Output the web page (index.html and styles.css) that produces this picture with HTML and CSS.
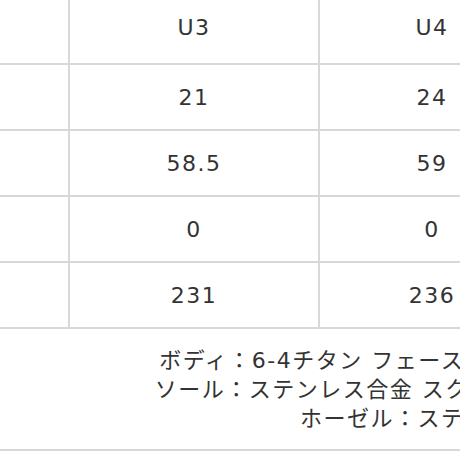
FILE: index.html
```html
<!DOCTYPE html>
<html lang="ja">
<head>
<meta charset="utf-8">
<link rel="stylesheet" href="styles.css">
</head>
<body>
<table class="spec">
  <colgroup>
    <col class="c-label">
    <col class="c-u3">
    <col class="c-u4">
    <col class="c-u5">
  </colgroup>
  <tr class="head">
    <td class="label"></td>
    <td>U3</td>
    <td>U4</td>
    <td>U5</td>
  </tr>
  <tr>
    <td class="label"></td>
    <td>21</td>
    <td>24</td>
    <td>27</td>
  </tr>
  <tr>
    <td class="label"></td>
    <td>58.5</td>
    <td>59</td>
    <td>59.5</td>
  </tr>
  <tr>
    <td class="label"></td>
    <td>0</td>
    <td>0</td>
    <td>0</td>
  </tr>
  <tr>
    <td class="label"></td>
    <td>231</td>
    <td>236</td>
    <td>241</td>
  </tr>
  <tr class="foot">
    <td colspan="4">ボディ：6-4チタン フェース：特殊高強度チタン<br>ソール：ステンレス合金 スクリュー：ステンレス<br>ホーゼル：ステンレス</td>
  </tr>
</table>
</body>
</html>
```
FILE: styles.css
```css
html, body {
  margin: 0;
  padding: 0;
  background: #ffffff;
}

.spec {
  border-collapse: separate;
  border-spacing: 0;
  table-layout: fixed;
  width: 772px;
  font-family: "DejaVu Sans", "Noto Sans CJK JP", sans-serif;
  font-size: 22px;
  letter-spacing: 1.5px;
  color: #333333;
}

.c-label { width: 70px; }
.c-u3 { width: 250px; }
.c-u4 { width: 226px; }
.c-u5 { width: 226px; }

.spec td {
  padding: 0;
  height: 64px;
  text-align: center;
  vertical-align: middle;
  border-right: 2px solid #d8d8d8;
  border-bottom: 2px solid #d8d8d8;
}

.spec .head td {
  height: 55px;
  padding-bottom: 8px;
}

.spec .foot td {
  height: 120px;
  padding-left: 63px;
  line-height: 29px;
  border-right: 0;
}
```
